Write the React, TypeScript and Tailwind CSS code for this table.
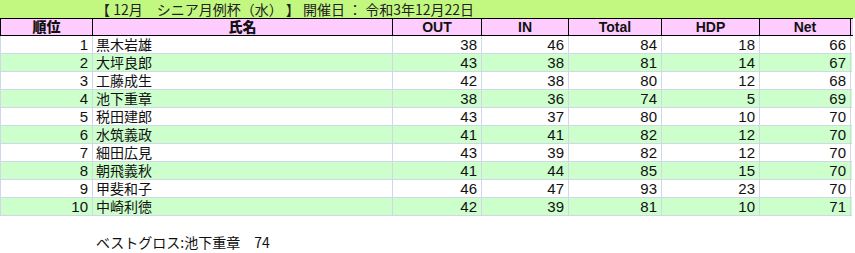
const rows = [
  { rank: 1, name: "黒木岩雄", out: 38, inn: 46, total: 84, hdp: 18, net: 66 },
  { rank: 2, name: "大坪良郎", out: 43, inn: 38, total: 81, hdp: 14, net: 67 },
  { rank: 3, name: "工藤成生", out: 42, inn: 38, total: 80, hdp: 12, net: 68 },
  { rank: 4, name: "池下重章", out: 38, inn: 36, total: 74, hdp: 5, net: 69 },
  { rank: 5, name: "税田建郎", out: 43, inn: 37, total: 80, hdp: 10, net: 70 },
  { rank: 6, name: "水筑義政", out: 41, inn: 41, total: 82, hdp: 12, net: 70 },
  { rank: 7, name: "細田広見", out: 43, inn: 39, total: 82, hdp: 12, net: 70 },
  { rank: 8, name: "朝飛義秋", out: 41, inn: 44, total: 85, hdp: 15, net: 70 },
  { rank: 9, name: "甲斐和子", out: 46, inn: 47, total: 93, hdp: 23, net: 70 },
  { rank: 10, name: "中崎利徳", out: 42, inn: 39, total: 81, hdp: 10, net: 71 }
];

const widths = ["w-[92px]", "w-[300px]", "w-[89px]", "w-[87px]", "w-[93px]", "w-[98px]", "w-[91px]"];
const headers = ["順位", "氏名", "OUT", "IN", "Total", "HDP", "Net"];

export default function App() {
  return (
    <div className="h-[253px] w-[855px] bg-white font-['Noto_Sans_CJK_JP',sans-serif] text-[14px] text-[#111]">
      <div className="flex h-[18px] items-center bg-[#c3f880] pl-[96px] text-[14px] leading-[18px] whitespace-pre text-[#222]">
        【 12月　シニア月例杯（水） 】 開催日 ： 令和3年12月22日
      </div>

      <div className="flex h-[18px] w-[853px] border-y border-l border-black bg-[#ffccff]">
        {headers.map((label, i) => (
          <div
            key={label}
            className={`${widths[i]} flex shrink-0 items-center justify-center border-r border-black font-['Liberation_Sans','Noto_Sans_CJK_JP',sans-serif] text-[14px] leading-[16px] font-black text-[#111]`}
          >
            {label}
          </div>
        ))}
      </div>

      {rows.map((row, idx) => (
        <div
          key={row.rank}
          className={`flex h-[18px] w-[852px] border-b border-l border-[#d0d7e5] ${idx % 2 === 1 ? "bg-[#ccffcc]" : "bg-white"}`}
        >
          <Cell w={widths[0]}>{row.rank}</Cell>
          <div className="flex w-[300px] shrink-0 items-center border-r border-[#d0d7e5] pl-[3px] leading-[17px]">{row.name}</div>
          <Cell w={widths[2]}>{row.out}</Cell>
          <Cell w={widths[3]}>{row.inn}</Cell>
          <Cell w={widths[4]}>{row.total}</Cell>
          <Cell w={widths[5]}>{row.hdp}</Cell>
          <Cell w={widths[6]}>{row.net}</Cell>
        </div>
      ))}

      <div className="mt-[17px] pl-[96px] text-[14px] leading-[18px] whitespace-pre">ベストグロス:池下重章　74</div>
    </div>
  );
}

function Cell({ w, children }: { w: string; children: React.ReactNode }) {
  return (
    <div className={`${w} flex shrink-0 items-center justify-end border-r border-[#d0d7e5] pr-[4px] font-['Liberation_Sans',sans-serif] text-[15px] leading-[17px]`}>
      {children}
    </div>
  );
}
